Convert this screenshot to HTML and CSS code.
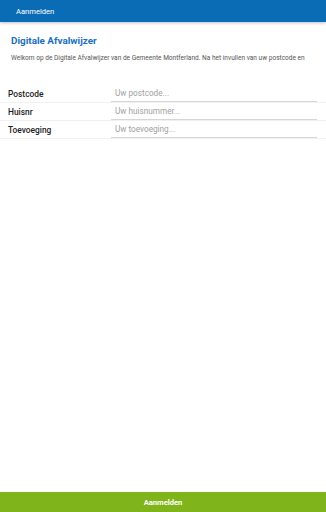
FILE: index.html
```html
<!DOCTYPE html>
<html lang="nl">
<head>
<meta charset="utf-8">
<title>Aanmelden</title>
<link rel="stylesheet" href="styles.css">
</head>
<body>
<div class="app">
  <header class="topbar"><span class="topbar-title">Aanmelden</span></header>
  <main class="content">
    <h1 class="heading">Digitale Afvalwijzer</h1>
    <p class="intro">Welkom op de Digitale Afvalwijzer van de Gemeente Montferland. Na het invullen van uw postcode en</p>
    <form class="form">
      <div class="row">
        <label class="label" for="pc">Postcode</label>
        <input class="input" id="pc" type="text" placeholder="Uw postcode...">
      </div>
      <div class="row">
        <label class="label" for="hn">Huisnr</label>
        <input class="input" id="hn" type="text" placeholder="Uw huisnummer...">
      </div>
      <div class="row">
        <label class="label" for="tv">Toevoeging</label>
        <input class="input" id="tv" type="text" placeholder="Uw toevoeging...">
      </div>
    </form>
  </main>
  <button class="submit" type="button">Aanmelden</button>
</div>
</body>
</html>
```

FILE: styles.css
```css
html, body {
  margin: 0;
  padding: 0;
  height: 100%;
  background: #ffffff;
  font-family: Roboto, "Liberation Sans", sans-serif;
}

.app {
  display: flex;
  flex-direction: column;
  height: 512px;
  width: 326px;
  overflow: hidden;
}

.topbar {
  height: 22px;
  flex: none;
  background: #0b6cb6;
  display: flex;
  align-items: center;
  padding-left: 16px;
  box-shadow: 0 1px 3px rgba(0, 0, 0, 0.25);
  position: relative;
  z-index: 1;
}

.topbar-title {
  color: #ffffff;
  font-size: 7.6px;
  line-height: 1;
  padding-top: 1px;
}

.content {
  flex: 1;
  padding: 0 0 0 11px;
}

.heading {
  margin: 12px 0 0 0;
  font-size: 9.9px;
  line-height: 13px;
  font-weight: 700;
  color: #1a6fc1;
}

.intro {
  margin: 7px 0 0 0;
  font-size: 6.55px;
  line-height: 9px;
  color: #555555;
  white-space: nowrap;
}

.form {
  margin: 22px 0 0 -11px;
  display: flex;
  flex-direction: column;
}

.row {
  display: flex;
  align-items: center;
  height: 18px;
  padding-left: 8px;
  border-bottom: 1px solid #f0f0f0;
  box-sizing: border-box;
}

.label {
  width: 103px;
  font-size: 8.4px;
  font-weight: 500;
  color: #1c1c1c;
  padding-top: 1px;
}

.input {
  width: 206px;
  height: 17px;
  border: none;
  border-bottom: 1px solid #d6d6d6;
  padding: 0 0 0 4px;
  margin: -1px 0 0 0;
  font-family: Roboto, "Liberation Sans", sans-serif;
  font-size: 8.2px;
  background: transparent;
  outline: none;
  box-sizing: border-box;
}

.input::placeholder {
  color: #a0a0a0;
}

.submit {
  flex: none;
  height: 20px;
  width: 100%;
  border: none;
  background: #7fb51a;
  color: #ffffff;
  font-family: Roboto, "Liberation Sans", sans-serif;
  font-size: 7.6px;
  font-weight: 700;
  padding: 0;
  margin: 0;
}
```
